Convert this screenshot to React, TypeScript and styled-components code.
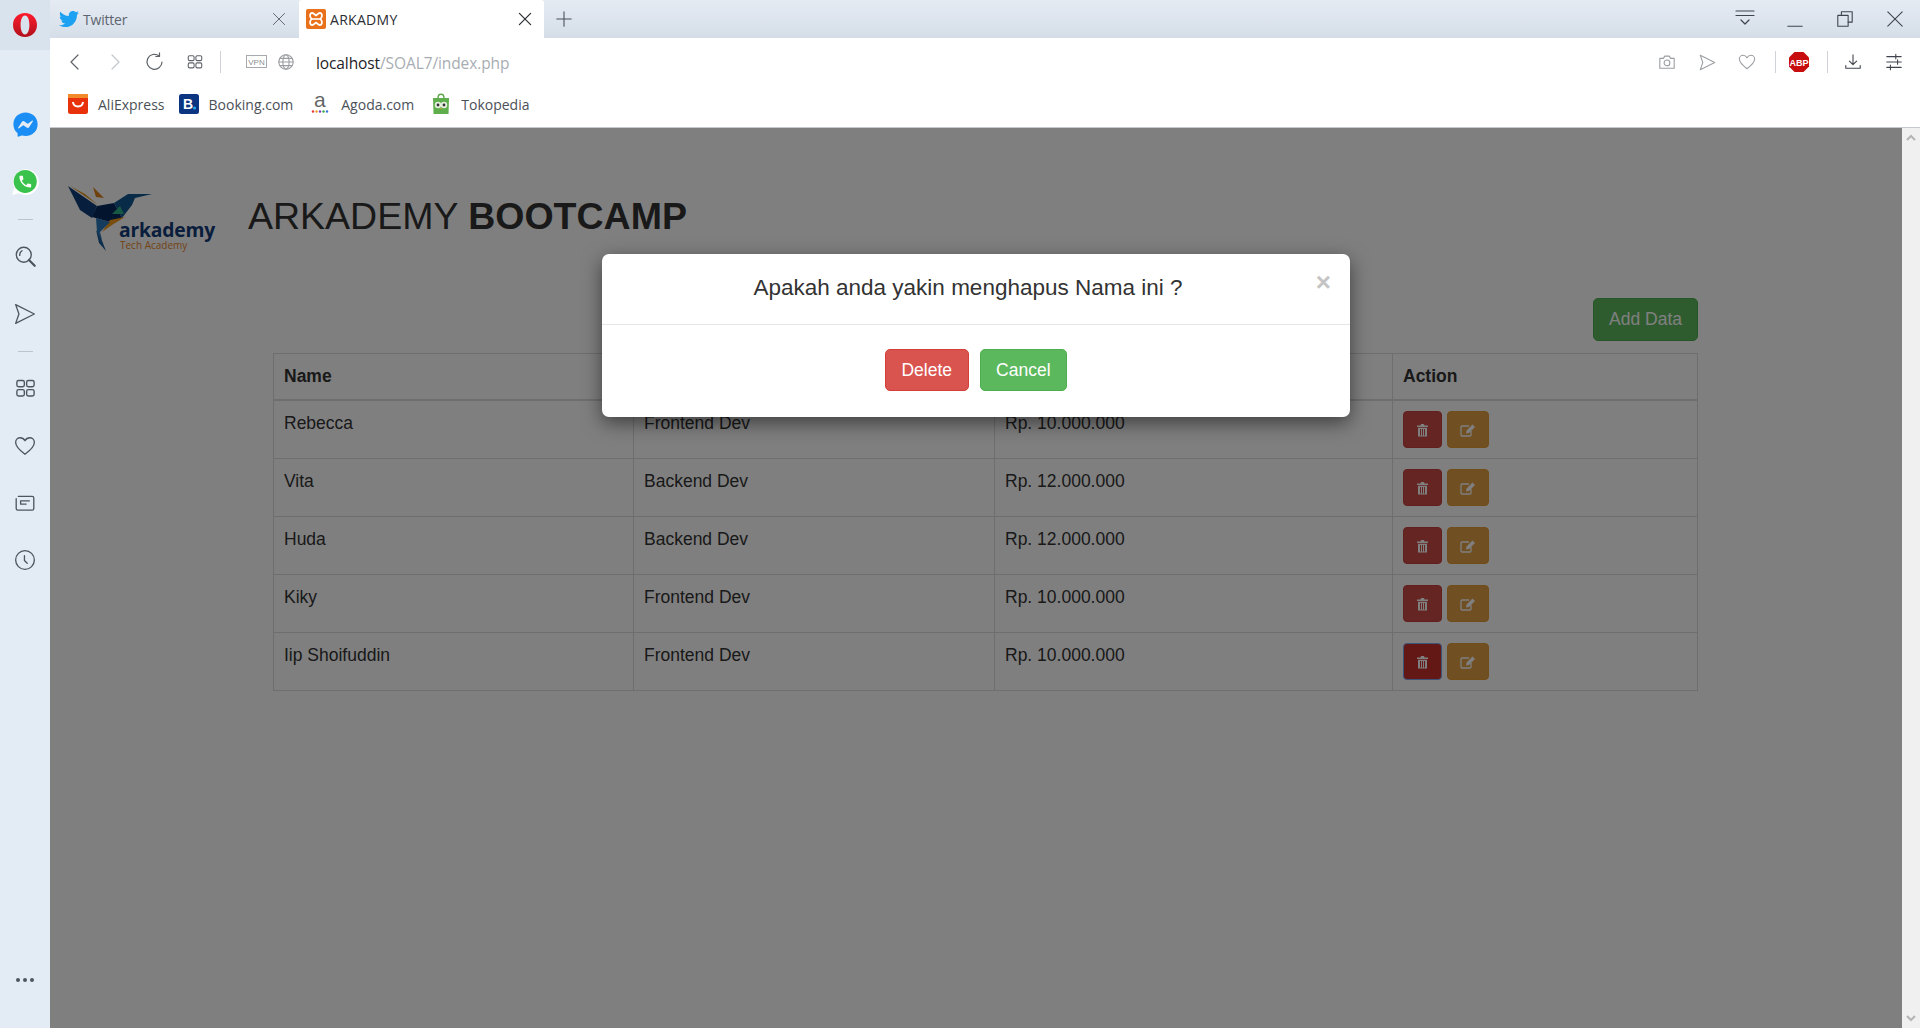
import React from 'react'
import styled, { createGlobalStyle } from 'styled-components'
import { FaTwitter, FaFacebookMessenger } from 'react-icons/fa'

const GlobalStyle = createGlobalStyle`
  html, body {
    margin: 0;
    padding: 0;
    height: 100%;
    overflow: hidden;
    background: #fff;
  }
  * {
    box-sizing: border-box;
  }
`

const Shell = styled.div`
  display: grid;
  grid-template-columns: 50px 1fr;
  width: 1920px;
  height: 1028px;
  overflow: hidden;
`

const Sidebar = styled.aside`
  display: flex;
  flex-direction: column;
  background: #e3ebf4;
  color: #4d5561;
`

const OperaButton = styled.div`
  display: flex;
  align-items: center;
  justify-content: center;
  height: 50px;
  margin-bottom: 46px;
  background: #d9e3ed;
`

const SideItem = styled.div`
  display: flex;
  align-items: center;
  justify-content: center;
  height: 57px;
`

const SideDash = styled.div`
  display: flex;
  align-items: center;
  justify-content: center;
  height: 18px;

  &::before {
    content: '';
    width: 15px;
    height: 1px;
    background: #bcc5cf;
  }
`

const SideDots = styled(SideItem)`
  margin-top: auto;
  margin-bottom: 20px;
`

const Main = styled.div`
  display: flex;
  flex-direction: column;
  min-width: 0;
`

const TabStrip = styled.div`
  display: flex;
  align-items: stretch;
  height: 38px;
  background: linear-gradient(#e5ebf3, #d5dee8);
`

const Tab = styled.div<{ $active?: boolean; $width: number }>`
  display: flex;
  align-items: center;
  width: ${({ $width }) => $width}px;
  padding: 0 ${({ $active }) => ($active ? 11 : 12)}px 0 ${({ $active }) => ($active ? 7 : 9)}px;
  gap: 4px;
  font-family: 'Open Sans', sans-serif;
  font-size: 14px;
  letter-spacing: ${({ $active }) => ($active ? 0.3 : -0.2)}px;
  color: ${({ $active }) => ($active ? '#2a2d33' : '#5d6570')};
  background: ${({ $active }) => ($active ? '#fff' : 'transparent')};
  border-radius: ${({ $active }) => ($active ? '3px 3px 0 0' : '0')};
`

const TabTitle = styled.span`
  flex: 1;
`

const NewTab = styled.div`
  display: flex;
  align-items: center;
  margin-left: 11px;
  color: #4a4f57;
`

const WindowControls = styled.div`
  display: flex;
  align-items: center;
  margin-left: auto;
  color: #3f444c;
`

const WindowButton = styled.div`
  display: flex;
  align-items: center;
  justify-content: center;
  width: 50px;
  height: 38px;
`

const NavBar = styled.div`
  display: flex;
  align-items: center;
  height: 48px;
  padding: 0 3px 0 5px;
  background: #fff;
  color: #5f646b;
`

const NavCell = styled.div<{ $width?: number; $muted?: boolean; $left?: number; $right?: number }>`
  display: flex;
  align-items: center;
  justify-content: center;
  flex: none;
  width: ${({ $width }) => $width ?? 40}px;
  height: 40px;
  margin: 0 ${({ $right }) => $right ?? 0}px 0 ${({ $left }) => $left ?? 0}px;
  color: ${({ $muted }) => ($muted ? '#9a9da1' : 'inherit')};
`

const NavDivider = styled.div<{ $gap: number }>`
  flex: none;
  width: 1px;
  height: 22px;
  margin: 0 ${({ $gap }) => $gap}px;
  background: #cfd2d6;
`

const AddressText = styled.div`
  flex: 1;
  margin: 2px 0 0 16px;
  font-family: 'Open Sans', sans-serif;
  font-size: 15.5px;
  letter-spacing: -0.1px;
  color: #a8adb3;

  b {
    font-weight: 400;
    color: #1f2227;
  }
`

const BookmarkBar = styled.div`
  display: flex;
  align-items: center;
  height: 42px;
  padding: 0 0 5px 18px;
  background: #fff;
  border-bottom: 1px solid #c5c8cc;
`

const Bookmark = styled.div<{ $gap: number; $after: number }>`
  display: flex;
  align-items: center;
  gap: ${({ $gap }) => $gap}px;
  margin-right: ${({ $after }) => $after}px;
  font-family: 'Open Sans', sans-serif;
  font-size: 14px;
  letter-spacing: 0;
  color: #4b5058;
`

const PageArea = styled.div`
  display: flex;
  flex: 1;
  min-height: 0;
`

const Viewport = styled.div`
  position: relative;
  flex: 1;
  overflow: hidden;
  background: #fff;
  font-family: 'Liberation Sans', Arial, sans-serif;
  font-size: 17.5px;
  line-height: 25px;
  color: #333;
`

const Scrollbar = styled.div`
  display: flex;
  flex-direction: column;
  justify-content: space-between;
  align-items: center;
  flex: none;
  width: 18px;
  padding: 6px 0;
  background: #f0f0f0;
  color: #b4b4b4;
`

const BrandRow = styled.header`
  display: flex;
  align-items: center;
  height: 100px;
  margin-top: 42px;
`

const Heading = styled.h1`
  margin: 0 0 8px 8px;
  font-size: 37.5px;
  line-height: 50px;
  font-weight: 400;

  b {
    font-weight: 700;
  }
`

const Content = styled.section`
  width: 1425px;
  margin: 28px 0 0 223px;
`

const Toolbar = styled.div`
  display: flex;
  justify-content: flex-end;
  margin-bottom: 12px;
`

const AddButton = styled.button`
  height: 43px;
  padding: 0 15px;
  font: inherit;
  color: #fff;
  background: #5cb85c;
  border: 1px solid #4cae4c;
  border-radius: 5px;
`

const DataTable = styled.table`
  width: 1424px;
  table-layout: fixed;
  border-collapse: collapse;
`

const Column = styled.col<{ $width: number }>`
  width: ${({ $width }) => $width}px;
`

const HeadCell = styled.th`
  height: 46px;
  padding: 10px;
  text-align: left;
  font-weight: 700;
  border: 1px solid #ddd;
  border-bottom-width: 2px;
`

const Cell = styled.td`
  height: 58px;
  padding: 10px;
  vertical-align: top;
  border: 1px solid #ddd;
`

const ActionRow = styled.div`
  display: flex;
  gap: 5px;
`

const SmallButton = styled.button<{ $tone: 'danger' | 'focus' | 'warning' }>`
  display: flex;
  align-items: center;
  justify-content: center;
  width: ${({ $tone }) => ($tone === 'warning' ? 42 : 39)}px;
  height: 37px;
  padding: 0;
  color: #fff;
  border-radius: 4px;
  border: 1px solid
    ${({ $tone }) => ($tone === 'warning' ? '#e29a32' : $tone === 'focus' ? '#7ba6f5' : '#c43f3a')};
  background: ${({ $tone }) =>
    $tone === 'warning' ? '#e09e46' : $tone === 'focus' ? '#c9302c' : '#cb4a46'};
`

const Backdrop = styled.div`
  position: absolute;
  inset: 0;
  background: rgba(0, 0, 0, 0.5);
`

const Modal = styled.div`
  position: absolute;
  top: 126px;
  left: 552px;
  width: 748px;
  height: 163px;
  background: #fff;
  border-radius: 7px;
  box-shadow: 0 6px 19px rgba(0, 0, 0, 0.5);
`

const ModalHeader = styled.div`
  position: relative;
  height: 71px;
  padding: 17px 16px 0 0;
  text-align: center;
  font-size: 22.5px;
  line-height: 33px;
  border-bottom: 1px solid #e5e5e5;
`

const CloseMark = styled.span`
  position: absolute;
  top: 15px;
  right: 19px;
  font-size: 26px;
  line-height: 26px;
  font-weight: 700;
  color: #c4c4c4;
`

const ModalFooter = styled.div`
  display: flex;
  justify-content: center;
  gap: 11px;
  padding-top: 24px;
`

const ModalButton = styled.button<{ $kind: 'delete' | 'cancel' }>`
  height: 42px;
  padding: 0 15.5px;
  font: inherit;
  font-size: 17.5px;
  color: #fff;
  border-radius: 5px;
  border: 1px solid ${({ $kind }) => ($kind === 'delete' ? '#d43f3a' : '#4cae4c')};
  background: ${({ $kind }) => ($kind === 'delete' ? '#d9534f' : '#5cb85c')};
`

const Line = ({ size = 20, children }: { size?: number; children: React.ReactNode }) => (
  <svg
    width={size}
    height={size}
    viewBox="0 0 20 20"
    fill="none"
    stroke="currentColor"
    strokeWidth="1.2"
    strokeLinecap="round"
    strokeLinejoin="round"
  >
    {children}
  </svg>
)

const GridIcon = ({ size = 18 }: { size?: number }) => (
  <Line size={size}>
    <rect x="2.5" y="3" width="6.5" height="5.5" rx="1.5" />
    <rect x="11" y="3" width="6.5" height="5.5" rx="1.5" />
    <rect x="2.5" y="11" width="6.5" height="5.5" rx="1.5" />
    <rect x="11" y="11" width="6.5" height="5.5" rx="1.5" />
  </Line>
)

const SendIcon = ({ size = 22 }: { size?: number }) => (
  <Line size={size}>
    <path d="M1.5 1.5 L18.5 10 L1.5 18.5 L4.5 10 Z" />
  </Line>
)

const HeartIcon = ({ size = 22 }: { size?: number }) => (
  <Line size={size}>
    <path d="M10 17.5 C6 14.5 1.5 11 1.5 6.8 C1.5 4.2 3.5 2.5 5.6 2.5 C7.5 2.5 9 3.5 10 5.2 C11 3.5 12.5 2.5 14.4 2.5 C16.5 2.5 18.5 4.2 18.5 6.8 C18.5 11 14 14.5 10 17.5 Z" />
  </Line>
)

const OperaLogo = () => (
  <svg width="26" height="26" viewBox="0 0 26 26">
    <defs>
      <linearGradient id="operaRed" x1="0" y1="0" x2="0" y2="1">
        <stop offset="0" stopColor="#ff1b2d" />
        <stop offset="1" stopColor="#b0101c" />
      </linearGradient>
    </defs>
    <path
      fillRule="evenodd"
      fill="url(#operaRed)"
      d="M13 1 C20 1 25 6.4 25 13 C25 19.6 20 25 13 25 C6 25 1 19.6 1 13 C1 6.4 6 1 13 1 Z M13 3.6 C10.3 3.6 8.6 7.6 8.6 13 C8.6 18.4 10.3 22.4 13 22.4 C15.7 22.4 17.4 18.4 17.4 13 C17.4 7.6 15.7 3.6 13 3.6 Z"
    />
  </svg>
)

const WhatsappIcon = () => (
  <svg width="28" height="28" viewBox="0 0 25 25">
    <path d="M1 24 L3 17.5 A11.5 11.5 0 1 1 7.5 22.5 Z" fill="#fff" />
    <circle cx="12.7" cy="12" r="10.3" fill="#3ac34c" />
    <g transform="translate(5.8 5.2) scale(0.58)">
      <path
        fill="#fff"
        d="M6.6 10.8c1.4 2.8 3.8 5.1 6.6 6.6l2.2-2.2c.3-.3.7-.4 1-.2 1.100.4 2.300.6 3.600.6.600 0 1 .4 1 1V20c0 .6-.4 1-1 1C10.600 21 3 13.400 3 4c0-.6.4-1 1-1h3.500c.6 0 1 .4 1 1 0 1.300.2 2.500.6 3.600.1.300 0 .7-.2 1z"
      />
    </g>
  </svg>
)

const XamppIcon = () => (
  <svg width="20" height="20" viewBox="0 0 20 20">
    <rect width="20" height="20" rx="2" fill="#e9711c" />
    <path
      d="M6 4 C8 4 9 6 10 6.5 C11 6 12 4 14 4 C16 4 17 7 14.5 10 C17 13 16 16 14 16 C12 16 11 14 10 13.5 C9 14 8 16 6 16 C4 16 3 13 5.5 10 C3 7 4 4 6 4 Z"
      fill="none"
      stroke="#fff"
      strokeWidth="1.8"
    />
    <path d="M6 10 H14" stroke="#fff" strokeWidth="1.6" />
  </svg>
)

const AliIcon = () => (
  <svg width="20" height="20" viewBox="0 0 20 20">
    <rect width="20" height="20" rx="2.5" fill="#e8320b" />
    <rect width="20" height="4" fill="#f2892a" />
    <path d="M5 8 C5.5 14 14.5 14 15 8" fill="none" stroke="#fff" strokeWidth="2" />
  </svg>
)

const BookingIcon = () => (
  <svg width="20" height="20" viewBox="0 0 20 20">
    <rect width="20" height="20" rx="2.5" fill="#0b3580" />
    <text x="4" y="15" fontFamily="Liberation Sans, sans-serif" fontSize="14" fontWeight="700" fill="#fff">
      B
    </text>
    <circle cx="15.5" cy="14" r="1.6" fill="#22a6e8" />
  </svg>
)

const AgodaIcon = () => (
  <svg width="18" height="22" viewBox="0 0 18 22">
    <text x="3" y="13.5" fontFamily="Liberation Sans, sans-serif" fontSize="21" fill="#666">
      a
    </text>
    <circle cx="2" cy="18.5" r="1.2" fill="#e33" />
    <circle cx="5.5" cy="18.5" r="1.2" fill="#f0a020" />
    <circle cx="9" cy="18.5" r="1.2" fill="#7b3fbf" />
    <circle cx="12.5" cy="18.5" r="1.2" fill="#3ba84a" />
    <circle cx="16" cy="18.5" r="1.2" fill="#3276d8" />
  </svg>
)

const TokopediaIcon = () => (
  <svg width="18" height="22" viewBox="0 0 18 22">
    <path d="M6 5 C6 0 12 0 12 5" fill="none" stroke="#5da64a" strokeWidth="1.4" />
    <path d="M1 5 H17 L16.5 21 H1.5 Z" fill="#5fae4e" />
    <circle cx="6" cy="12" r="3.2" fill="#e7f0e0" />
    <circle cx="12" cy="12" r="3.2" fill="#e7f0e0" />
    <circle cx="6" cy="12" r="1.4" fill="#333" />
    <circle cx="12" cy="12" r="1.4" fill="#333" />
    <path d="M8 15 H10 L9 16.5 Z" fill="#e0a020" />
  </svg>
)

const AbpIcon = () => (
  <svg width="22" height="22" viewBox="0 0 22 22">
    <path d="M6.5 1 H15.5 L21 6.5 V15.5 L15.5 21 H6.5 L1 15.5 V6.5 Z" fill="#c70d0d" />
    <text x="11" y="14.5" textAnchor="middle" fontFamily="Liberation Sans, sans-serif" fontSize="9" fontWeight="700" fill="#fff">
      ABP
    </text>
  </svg>
)

const TrashIcon = () => (
  <svg width="13" height="14" viewBox="0 0 13 14">
    <path d="M1 2.5 H4.5 L5 1 H8 L8.5 2.5 H12 V4 H1 Z" fill="currentColor" />
    <path
      fillRule="evenodd"
      fill="currentColor"
      d="M2 4.8 H11 V13.5 H2 Z M4 6 V12.5 H5 V6 Z M6 6 V12.5 H7 V6 Z M8 6 V12.5 H9 V6 Z"
    />
  </svg>
)

const EditIcon = () => (
  <svg width="16" height="14" viewBox="0 0 16 14" fill="none" stroke="currentColor">
    <path d="M11 8 V12 Q11 13 10 13 H2 Q1 13 1 12 V4 Q1 3 2 3 H9" strokeWidth="1.3" />
    <path d="M6 10.5 L6.6 7.6 L12.5 1.5 L15 4 L9 10 Z" fill="currentColor" stroke="none" />
  </svg>
)

const ArkademyLogo = () => (
  <svg width="190" height="100" viewBox="0 0 190 100">
    <polygon points="18,16 30,40 42,48 47,36" fill="#0e3f78" />
    <polygon points="20,16 48,35 35,24" fill="#e8921c" />
    <polygon points="43,17 54,28 46,27" fill="#e0801a" />
    <polygon points="47,36 64,33 72,48 60,52 42,47" fill="#062a5c" />
    <polygon points="64,33 78,24 102,24 85,28 82,35 72,48" fill="#11568f" />
    <polygon points="62,44 70,36 74,44" fill="#2fb08a" />
    <polygon points="52,62 60,50 75,47 62,55" fill="#f09a1c" />
    <polygon points="46,48 60,52 50,62 52,70 47,62" fill="#2a78b8" />
    <polygon points="46,60 51,68 56,81 49,73" fill="#1a5c9a" />
    <text x="69" y="67" fontFamily="Open Sans, sans-serif" fontSize="19.3" fontWeight="700" letterSpacing="-0.2" fill="#123a78">
      arkademy
    </text>
    <text x="70" y="79" fontFamily="Open Sans, sans-serif" fontSize="10" fill="#e8862a">
      Tech Academy
    </text>
  </svg>
)

const rows = [
  { name: 'Rebecca', job: 'Frontend Dev', salary: 'Rp. 10.000.000' },
  { name: 'Vita', job: 'Backend Dev', salary: 'Rp. 12.000.000' },
  { name: 'Huda', job: 'Backend Dev', salary: 'Rp. 12.000.000' },
  { name: 'Kiky', job: 'Frontend Dev', salary: 'Rp. 10.000.000' },
  { name: 'Iip Shoifuddin', job: 'Frontend Dev', salary: 'Rp. 10.000.000' },
]

const App = () => (
  <Shell>
    <GlobalStyle />
    <Sidebar>
      <OperaButton>
        <OperaLogo />
      </OperaButton>
      <SideItem>
        <FaFacebookMessenger size={25} color="#1b8ef5" />
      </SideItem>
      <SideItem>
        <WhatsappIcon />
      </SideItem>
      <SideDash />
      <SideItem>
        <Line size={23}>
          <circle cx="8.5" cy="8.5" r="6.5" />
          <path d="M5 9 A4 4 0 0 1 7 5" />
          <path d="M13 13 L18 18" strokeWidth="2" />
        </Line>
      </SideItem>
      <SideItem>
        <SendIcon />
      </SideItem>
      <SideDash />
      <SideItem>
        <GridIcon size={23} />
      </SideItem>
      <SideItem>
        <HeartIcon />
      </SideItem>
      <SideItem>
        <Line size={22}>
          <path d="M4 4 H16.5 Q18 4 18 5.5 V15 Q18 16.5 16.5 16.5 H3.5 Q2 16.5 2 15 V6" />
          <path d="M6 8 H14 M6 11 H11 M6 8 V11" />
        </Line>
      </SideItem>
      <SideItem>
        <Line size={22}>
          <circle cx="10" cy="10" r="8.5" />
          <path d="M9.5 6 V10.5 L12 13" />
        </Line>
      </SideItem>
      <SideDots>
        <svg width="20" height="6" viewBox="0 0 20 6" fill="#4d5561">
          <circle cx="3" cy="3" r="2" />
          <circle cx="10" cy="3" r="2" />
          <circle cx="17" cy="3" r="2" />
        </svg>
      </SideDots>
    </Sidebar>

    <Main>
      <TabStrip>
        <Tab $width={249}>
          <FaTwitter size={20} color="#1da1f2" />
          <TabTitle>Twitter</TabTitle>
          <Line size={16}>
            <path d="M3 3 L17 17 M17 3 L3 17" />
          </Line>
        </Tab>
        <Tab $active $width={245}>
          <XamppIcon />
          <TabTitle>ARKADMY</TabTitle>
          <Line size={16}>
            <path d="M3 3 L17 17 M17 3 L3 17" strokeWidth="1.5" />
          </Line>
        </Tab>
        <NewTab>
          <Line size={18}>
            <path d="M10 2 V18 M2 10 H18" />
          </Line>
        </NewTab>
        <WindowControls>
          <WindowButton>
            <Line size={20}>
              <path d="M1 2 H19 M1 6.5 H19 M6 11 L10 15 L14 11" />
            </Line>
          </WindowButton>
          <WindowButton>
            <Line size={18}>
              <path d="M2 18 H18" />
            </Line>
          </WindowButton>
          <WindowButton>
            <Line size={18}>
              <rect x="2" y="6" width="11.5" height="12" />
              <path d="M6 6 V2 H18 V13.5 H13.5" />
            </Line>
          </WindowButton>
          <WindowButton>
            <Line size={18}>
              <path d="M2 2 L18 18 M18 2 L2 18" />
            </Line>
          </WindowButton>
        </WindowControls>
      </TabStrip>

      <NavBar>
        <NavCell>
          <Line size={20}>
            <path d="M13 3 L6 10 L13 17" />
          </Line>
        </NavCell>
        <NavCell>
          <Line size={20}>
            <path d="M7 3 L14 10 L7 17" stroke="#c4c7cb" />
          </Line>
        </NavCell>
        <NavCell>
          <Line size={20}>
            <path d="M17 10 A7.5 7.5 0 1 1 14 3.8 M14.5 0.8 V4.5 H10.8" />
          </Line>
        </NavCell>
        <NavCell>
          <GridIcon />
        </NavCell>
        <NavDivider $gap={5} />
        <NavCell $width={30} $left={16}>
          <svg width="22" height="14" viewBox="0 0 22 14">
            <rect x="0.5" y="0.5" width="20" height="12" fill="none" stroke="#a6a9ad" />
            <text x="10.5" y="10" textAnchor="middle" fontFamily="Liberation Sans, sans-serif" fontSize="8" fill="#8d9095">
              VPN
            </text>
          </svg>
        </NavCell>
        <NavCell $width={28} $muted>
          <Line size={18}>
            <circle cx="10" cy="10" r="8" />
            <ellipse cx="10" cy="10" rx="3.5" ry="8" />
            <path d="M2 10 H18 M3.2 6 H16.8 M3.2 14 H16.8" />
          </Line>
        </NavCell>
        <AddressText>
          <b>localhost</b>/SOAL7/index.php
        </AddressText>
        <NavCell $muted>
          <Line size={18}>
            <path d="M2 6 H6 L7.5 3.5 H12.5 L14 6 H18 V17 H2 Z" />
            <circle cx="10" cy="11" r="3.2" />
          </Line>
        </NavCell>
        <NavCell $muted>
          <SendIcon size={17} />
        </NavCell>
        <NavCell $muted>
          <HeartIcon size={18} />
        </NavCell>
        <NavDivider $gap={8} />
        <NavCell $width={30} $right={6}>
          <AbpIcon />
        </NavCell>
        <NavDivider $gap={7} />
        <NavCell $width={36}>
          <Line size={18}>
            <path d="M10 2 V13 M6 9 L10 13 L14 9 M2 14 V17 H18 V14" stroke="#3f444c" />
          </Line>
        </NavCell>
        <NavCell $width={46}>
          <Line size={18}>
            <path d="M2 4 H18 M2 10 H18 M2 16 H18 M12 1.5 V6.5 M14 7.5 V12.5 M6 13.5 V18.5" stroke="#3f444c" />
          </Line>
        </NavCell>
      </NavBar>

      <BookmarkBar>
        <Bookmark $gap={10} $after={14}>
          <AliIcon />
          AliExpress
        </Bookmark>
        <Bookmark $gap={10} $after={18}>
          <BookingIcon />
          Booking.com
        </Bookmark>
        <Bookmark $gap={12} $after={18}>
          <AgodaIcon />
          Agoda.com
        </Bookmark>
        <Bookmark $gap={11} $after={0}>
          <TokopediaIcon />
          Tokopedia
        </Bookmark>
      </BookmarkBar>

      <PageArea>
        <Viewport>
          <BrandRow>
            <ArkademyLogo />
            <Heading>
              ARKADEMY <b>BOOTCAMP</b>
            </Heading>
          </BrandRow>
          <Content>
            <Toolbar>
              <AddButton>Add Data</AddButton>
            </Toolbar>
            <DataTable>
              <colgroup>
                <Column $width={360} />
                <Column $width={361} />
                <Column $width={398} />
                <Column $width={305} />
              </colgroup>
              <thead>
                <tr>
                  <HeadCell>Name</HeadCell>
                  <HeadCell>Job</HeadCell>
                  <HeadCell>Salary</HeadCell>
                  <HeadCell>Action</HeadCell>
                </tr>
              </thead>
              <tbody>
                {rows.map((row, index) => (
                  <tr key={row.name}>
                    <Cell>{row.name}</Cell>
                    <Cell>{row.job}</Cell>
                    <Cell>{row.salary}</Cell>
                    <Cell>
                      <ActionRow>
                        <SmallButton $tone={index === rows.length - 1 ? 'focus' : 'danger'}>
                          <TrashIcon />
                        </SmallButton>
                        <SmallButton $tone="warning">
                          <EditIcon />
                        </SmallButton>
                      </ActionRow>
                    </Cell>
                  </tr>
                ))}
              </tbody>
            </DataTable>
          </Content>
          <Backdrop />
          <Modal>
            <ModalHeader>
              Apakah anda yakin menghapus Nama ini ?
              <CloseMark>×</CloseMark>
            </ModalHeader>
            <ModalFooter>
              <ModalButton $kind="delete">Delete</ModalButton>
              <ModalButton $kind="cancel">Cancel</ModalButton>
            </ModalFooter>
          </Modal>
        </Viewport>
        <Scrollbar>
          <svg width="10" height="7" viewBox="0 0 10 7" fill="none" stroke="currentColor" strokeWidth="2">
            <path d="M1 6 L5 2 L9 6" />
          </svg>
          <svg width="10" height="7" viewBox="0 0 10 7" fill="none" stroke="currentColor" strokeWidth="2">
            <path d="M1 1 L5 5 L9 1" />
          </svg>
        </Scrollbar>
      </PageArea>
    </Main>
  </Shell>
)

export default App
